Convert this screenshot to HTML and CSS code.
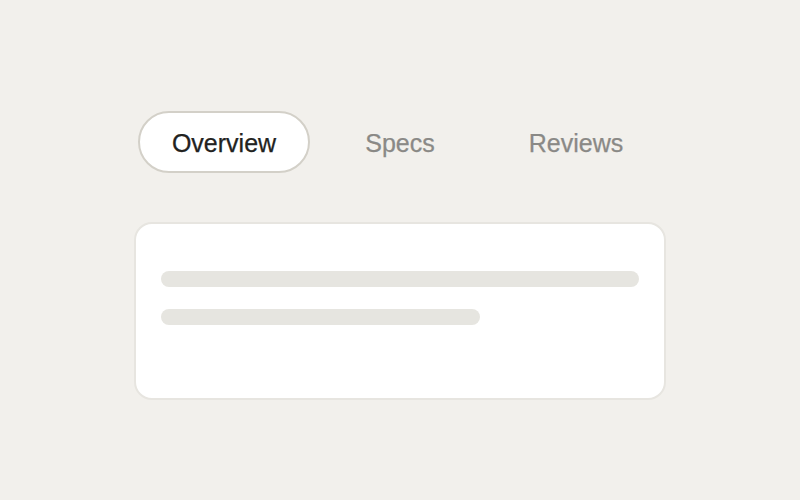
FILE: index.html
```html
<!DOCTYPE html>
<html lang="en">
<head>
  <meta charset="UTF-8">
  <meta name="viewport" content="width=device-width, initial-scale=1.0">
  <title>Tabs</title>
  <link rel="stylesheet" href="styles.css">
</head>
<body>
  <div class="panel">
    <!-- Abas -->
    <div class="tabs">
      <button class="tab active">Overview</button>
      <button class="tab">Specs</button>
      <button class="tab">Reviews</button>
    </div>

    <!-- Conteúdo (placeholder) -->
    <div class="card">
      <div class="line"></div>
      <div class="line short"></div>
    </div>
  </div>
</body>
</html>
```

FILE: styles.css
```css
body {
  font-family: "Liberation Sans", Arial, sans-serif;
  background-color: #f2f0ec;
  margin: 0;
  padding: 0;
}
.panel {
  width: 532px;
  margin: 0 auto;
  padding-top: 111px;
}
.tabs {
  display: flex;
  gap: 4px;
  padding: 0 4px;
}
.tab {
  width: 172px;
  height: 62px;
  padding: 3px 0 0;
  font-family: inherit;
  font-size: 25px;
  color: #8a8986;
  background: transparent;
  border: 2px solid transparent;
  border-radius: 31px;
  -webkit-text-stroke: 0.25px currentColor;
  cursor: pointer;
}
.tab.active {
  color: #222220;
  background-color: #fff;
  border-color: #d3d0c8;
}
.card {
  margin-top: 49px;
  height: 127px;
  padding: 47px 25px 0;
  background-color: #fff;
  border: 2px solid #e7e5e0;
  border-radius: 18px;
}
.line {
  height: 16px;
  border-radius: 8px;
  background-color: #e6e5e0;
}
.line.short {
  width: 319px;
  margin-top: 22px;
}
```
